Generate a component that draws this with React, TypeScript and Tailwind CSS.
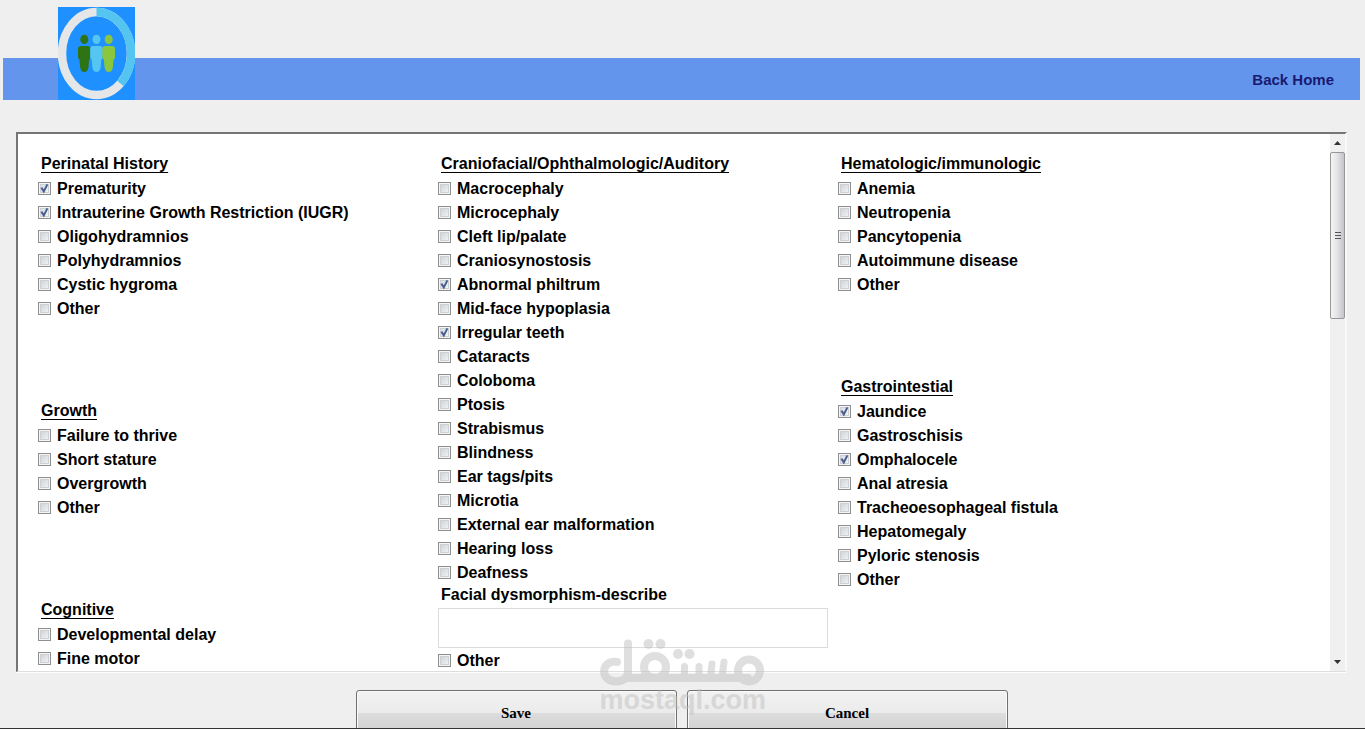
import React, { useId } from "react";

type Item = { label: string; checked?: boolean };

const perinatal: Item[] = [
  { label: "Prematurity", checked: true },
  { label: "Intrauterine Growth Restriction (IUGR)", checked: true },
  { label: "Oligohydramnios" },
  { label: "Polyhydramnios" },
  { label: "Cystic hygroma" },
  { label: "Other" },
];

const growth: Item[] = [
  { label: "Failure to thrive" },
  { label: "Short stature" },
  { label: "Overgrowth" },
  { label: "Other" },
];

const cognitive: Item[] = [{ label: "Developmental delay" }, { label: "Fine motor" }];

const craniofacial: Item[] = [
  { label: "Macrocephaly" },
  { label: "Microcephaly" },
  { label: "Cleft lip/palate" },
  { label: "Craniosynostosis" },
  { label: "Abnormal philtrum", checked: true },
  { label: "Mid-face hypoplasia" },
  { label: "Irregular teeth", checked: true },
  { label: "Cataracts" },
  { label: "Coloboma" },
  { label: "Ptosis" },
  { label: "Strabismus" },
  { label: "Blindness" },
  { label: "Ear tags/pits" },
  { label: "Microtia" },
  { label: "External ear malformation" },
  { label: "Hearing loss" },
  { label: "Deafness" },
];

const hematologic: Item[] = [
  { label: "Anemia" },
  { label: "Neutropenia" },
  { label: "Pancytopenia" },
  { label: "Autoimmune disease" },
  { label: "Other" },
];

const gastro: Item[] = [
  { label: "Jaundice", checked: true },
  { label: "Gastroschisis" },
  { label: "Omphalocele", checked: true },
  { label: "Anal atresia" },
  { label: "Tracheoesophageal fistula" },
  { label: "Hepatomegaly" },
  { label: "Pyloric stenosis" },
  { label: "Other" },
];

function CheckRow({ label, checked = false }: Item) {
  const id = useId();
  return (
    <div className="flex h-6 items-center gap-1.5">
      <span className="grid shrink-0">
        <input
          id={id}
          type="checkbox"
          defaultChecked={checked}
          className="peer col-start-1 row-start-1 size-[13px] appearance-none border border-[#8e8f8f] bg-linear-to-br from-[#c8cbd0] to-[#fafafa] shadow-[inset_0_0_0_1px_#f4f4f4,inset_0_0_0_2px_#cdd0d4] checked:from-[#cfd9e8]"
        />
        <svg
          viewBox="0 0 13 13"
          className="pointer-events-none invisible col-start-1 row-start-1 size-[13px] peer-checked:visible"
          fill="none"
          stroke="#4a5f8c"
          strokeWidth="2"
        >
          <path d="M3.4 5.6 L5.8 9.4 L9.4 2.4" />
        </svg>
      </span>
      <label htmlFor={id} className="pt-0.5 leading-[22px] whitespace-nowrap">
        {label}
      </label>
    </div>
  );
}

function Group({ title, items, children }: { title: string; items: Item[]; children?: React.ReactNode }) {
  return (
    <section>
      <h2 className="h-[25px] pl-[3px] leading-[26px] underline decoration-1 underline-offset-3">{title}</h2>
      {items.map((item) => (
        <CheckRow key={item.label} {...item} />
      ))}
      {children}
    </section>
  );
}

function Person({ x, color }: { x: number; color: string }) {
  return (
    <g fill={color} transform={`translate(${x} 0)`}>
      <ellipse cx="0" cy="32.4" rx="4" ry="4.7" />
      <path d="M-6.3 42 Q-6.3 39 -3.5 39 H3.5 Q6.3 39 6.3 42 V50 Q6.3 52 4.8 52.5 L4.2 60 Q3.6 65 0 65 Q-3.6 65 -4.2 60 L-4.8 52.5 Q-6.3 52 -6.3 50 Z" />
    </g>
  );
}

function Logo() {
  return (
    <svg viewBox="0 0 77 93" className="ml-[55px] h-[93px] w-[77px] shrink-0" role="img" aria-label="Logo">
      <rect width="77" height="93" fill="#1e90ff" />
      <ellipse cx="38.5" cy="46.5" rx="34.5" ry="41.5" fill="none" stroke="#e4e6e8" strokeWidth="8.5" />
      <path d="M38.5 5 A34.5 41.5 0 0 1 62.5 76.5" fill="none" stroke="#54c4f0" strokeWidth="8.5" />
      <Person x={26.3} color="#2f7414" />
      <Person x={38.5} color="#55c6f2" />
      <Person x={50.7} color="#8bc63f" />
    </svg>
  );
}

function ScrollBar() {
  return (
    <div className="flex w-[15px] shrink-0 flex-col items-center bg-[#f0f0f0]" aria-hidden="true">
      <svg viewBox="0 0 15 18" className="h-[18px] w-[15px]">
        <path d="M4 11 L7.5 7 L11 11 Z" fill="#333" />
      </svg>
      <div className="flex h-[167px] w-[15px] flex-col items-center justify-center gap-0.5 rounded-xs border border-[#979797] bg-linear-to-r from-[#f5f5f5] via-[#e2e2e4] to-[#c4c4c9]">
        <span className="h-px w-1.5 bg-[#555]" />
        <span className="h-px w-1.5 bg-[#555]" />
        <span className="h-px w-1.5 bg-[#555]" />
      </div>
      <svg viewBox="0 0 15 18" className="mt-auto h-[18px] w-[15px]">
        <path d="M4 7 L7.5 11 L11 7 Z" fill="#333" />
      </svg>
    </div>
  );
}

function Watermark() {
  return (
    <div className="pointer-events-none absolute bottom-[18px] left-1/2 flex w-[166px] -translate-x-1/2 flex-col opacity-50">
      <svg viewBox="0 0 166 50" className="h-[50px] w-[166px]" fill="none" stroke="#c0c0c0" strokeWidth="8" strokeLinecap="round">
        <path d="M17 23 C0 21 0 42.500 16 42.500 C24 42.500 28 38 28 32 V4.500 M26 39 H148" />
        <circle cx="55" cy="28" r="11" />
        <path d="M84.500 27.500 V38 M99 27.500 V38 M112 25 L110.500 38 M124 23 L122 38" strokeWidth="7" />
        <circle cx="149" cy="31.500" r="11" />
        <g fill="#c0c0c0" stroke="none">
          <circle cx="48.500" cy="5" r="5" />
          <circle cx="60.500" cy="5" r="5" />
          <circle cx="78" cy="15" r="5" />
          <circle cx="89.500" cy="15" r="5" />
        </g>
      </svg>
      <span className="text-center text-[27px] leading-[22px] text-[#c0c0c0]">mostaql.com</span>
    </div>
  );
}

const buttonClass =
  "h-[46px] w-[321px] rounded-[3px] border border-[#707070] bg-[linear-gradient(#f2f2f2,#ebebeb_50%,#dddddd_50%,#cfcfcf)] font-['Liberation_Serif',serif] text-[15px] font-bold text-black shadow-[inset_0_0_0_1px_#fafafa]";

export default function App() {
  return (
    <div className="relative flex h-screen flex-col overflow-hidden bg-[#efefef] font-['Liberation_Sans',Arial,sans-serif] text-base font-bold text-black">
      <header className="mt-[58px] mr-[5px] ml-[3px] flex h-[42px] shrink-0 items-end justify-between bg-[#6495ed]">
        <Logo />
        <a href="#home" className="mr-[26px] text-[15px] leading-10 text-[#191970]">
          Back Home
        </a>
      </header>

      <main className="mt-8 mr-[18px] ml-4 flex min-h-0 flex-1 border-2 border-b border-t-[#757575] border-r-[#f8f8f8] border-b-[#dedede] border-l-[#757575] bg-white shadow-[0_1px_0_#fcfcfc]">
        <div className="grid min-w-0 flex-1 grid-cols-[400px_400px_1fr] items-start overflow-y-auto pt-[17px] pl-5 [scrollbar-width:none]">
          <div className="flex flex-col gap-[78px]">
            <Group title="Perinatal History" items={perinatal} />
            <Group title="Growth" items={growth} />
            <Group title="Cognitive" items={cognitive} />
          </div>
          <Group title="Craniofacial/Ophthalmologic/Auditory" items={craniofacial}>
            <label htmlFor="facial" className="block h-6 pl-[3px] leading-[22px]">
              Facial dysmorphism-describe
            </label>
            <textarea id="facial" className="block h-10 w-[390px] resize-none border border-[#dcdcdc] bg-white p-1" />
            <CheckRow label="Other" />
          </Group>
          <div className="flex flex-col gap-[78px]">
            <Group title="Hematologic/immunologic" items={hematologic} />
            <Group title="Gastrointestial" items={gastro} />
          </div>
        </div>
        <ScrollBar />
      </main>

      <div className="mt-[18px] flex h-[38px] shrink-0 justify-center gap-2.5 overflow-hidden pr-0.5">
        <button type="button" className={buttonClass}>
          Save
        </button>
        <button type="button" className={buttonClass}>
          Cancel
        </button>
      </div>
      <div className="h-px shrink-0 bg-[#333333]" />
      <Watermark />
    </div>
  );
}
